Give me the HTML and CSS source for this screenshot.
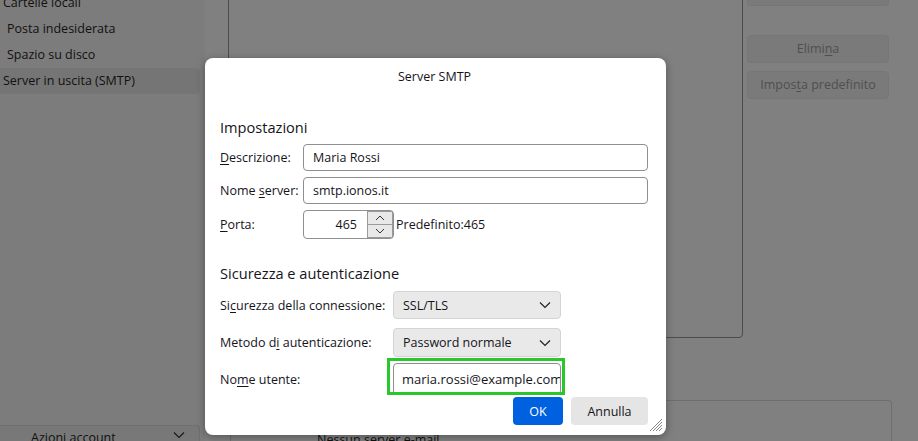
FILE: index.html
```html
<!DOCTYPE html>
<html lang="it">
<head>
    <meta charset="UTF-8">
    <title>Server SMTP</title>
    <link rel="stylesheet" href="styles.css">
</head>
<body>
    <div id="window">
        <div id="sidebar">
            <ul class="tree">
                <li class="root">Cartelle locali</li>
                <li class="sub">Posta indesiderata</li>
                <li class="sub">Spazio su disco</li>
                <li class="root selected">Server in uscita (SMTP)</li>
            </ul>
            <div class="acc-actions">
                <span>Azioni account</span>
                <svg width="12" height="8" viewBox="0 0 12 8"><path d="M1 1.5 6 6.5 11 1.5" fill="none" stroke="#1a1a1a" stroke-width="1.2"/></svg>
            </div>
        </div>
        <div id="main">
            <div class="top-row">
                <div class="server-list"></div>
                <div class="side-btns">
                    <div class="sbtn cut"></div>
                    <div class="sbtn">Elimi<u>n</u>a</div>
                    <div class="sbtn">Impos<u>t</u>a predefinito</div>
                </div>
            </div>
            <div class="details">
                <span class="det-text">Nessun server e-mail</span>
            </div>
        </div>
    </div>

    <div id="dialog">
        <div class="dlg-title">Server SMTP</div>

        <h2 class="section-head">Impostazioni</h2>
        <div class="grid-settings">
            <label><u>D</u>escrizione:</label>
            <div class="field">Maria Rossi</div>

            <label>Nome <u>s</u>erver:</label>
            <div class="field">smtp.ionos.it</div>

            <label><u>P</u>orta:</label>
            <div class="port-row">
                <div class="port">465</div>
                <div class="spin">
                    <div class="spin-btn"><svg width="10" height="6" viewBox="0 0 10 6"><path d="M1 5 5 1 9 5" fill="none" stroke="#333" stroke-width="1"/></svg></div>
                    <div class="spin-btn"><svg width="10" height="6" viewBox="0 0 10 6"><path d="M1 1 5 5 9 1" fill="none" stroke="#333" stroke-width="1"/></svg></div>
                </div>
                <span class="default-port">Predefinito:465</span>
            </div>
        </div>

        <h2 class="section-head second">Sicurezza e autenticazione</h2>
        <div class="grid-security">
            <label>Si<u>c</u>urezza della connessione:</label>
            <div class="select">SSL/TLS
                <svg width="12" height="8" viewBox="0 0 12 8"><path d="M1 1.5 6 6.5 11 1.5" fill="none" stroke="#222" stroke-width="1.2"/></svg>
            </div>

            <label>Metodo d<u>i</u> autenticazione:</label>
            <div class="select">Password normale
                <svg width="12" height="8" viewBox="0 0 12 8"><path d="M1 1.5 6 6.5 11 1.5" fill="none" stroke="#222" stroke-width="1.2"/></svg>
            </div>

            <label>No<u>m</u>e utente:</label>
            <div class="user-wrap">
                <div class="field user">maria.rossi@example.com</div>
                <div class="highlight"></div>
            </div>
        </div>

        <div class="dlg-buttons">
            <button class="btn primary">OK</button>
            <button class="btn">Annulla</button>
        </div>

        <svg class="grip" width="13" height="13" viewBox="0 0 13 13">
            <path d="M12 3 3 12M12 6 6 12M12 9 9 12M12 0 0 12" stroke="#888" stroke-width="1"/>
        </svg>
    </div>
</body>
</html>
```

FILE: styles.css
```css
*{
    margin: 0;
    padding: 0;
    box-sizing: border-box;
}
body{
    width: 918px;
    height: 441px;
    overflow: hidden;
    background-color: #808080;
    font-family: "Open Sans", "Noto Sans", sans-serif;
    font-size: 12px;
    color: #15141a;
    position: relative;
}
u{
    text-decoration-thickness: 1px;
    text-underline-offset: 2px;
}
#window{
    display: flex;
    height: 441px;
}
#sidebar{
    width: 205px;
    background-color: #7c7c7c;
    display: flex;
    flex-direction: column;
    justify-content: space-between;
}
.tree{
    list-style: none;
    margin-top: -10px;
}
.tree li{
    height: 26px;
    line-height: 26px;
    font-size: 12.5px;
    color: #111;
    width: 200px;
    border-radius: 0 4px 4px 0;
}
.tree .root{
    padding-left: 3px;
}
.tree .sub{
    padding-left: 7px;
}
.tree .selected{
    background-color: #757575;
}
.acc-actions{
    height: 17px;
    width: 200px;
    margin-bottom: -1px;
    background-color: #787878;
    border-top: 1px solid #6f6f6f;
    border-right: 1px solid #6f6f6f;
    border-radius: 0 4px 0 0;
    display: flex;
    align-items: flex-start;
    justify-content: space-between;
    padding: 5px 14px 0 31px;
    font-size: 12.5px;
    line-height: 14px;
    color: #111;
}
#main{
    flex: 1;
    display: flex;
    flex-direction: column;
    padding-left: 23px;
}
.top-row{
    display: flex;
    height: 338px;
}
.server-list{
    width: 515px;
    margin-top: -6px;
    height: 344px;
    border: 1px solid #4d4d4d;
    border-radius: 0 0 4px 4px;
}
.side-btns{
    margin-left: 4px;
    width: 142px;
    display: flex;
    flex-direction: column;
    gap: 8px;
}
.sbtn{
    height: 28px;
    background-color: #7a7a7a;
    border: 1px solid #767676;
    border-radius: 4px;
    color: #4f4f4f;
    font-size: 12.5px;
    line-height: 26px;
    text-align: center;
}
.sbtn.cut{
    margin-top: -22px;
    margin-bottom: 21px;
}
.details{
    margin-top: 62px;
    margin-left: 2px;
    width: 662px;
    flex: 1;
    border: 1px solid #6e6e6e;
    border-radius: 4px 4px 0 0;
    border-bottom: none;
    padding: 30px 0 0 86px;
}
.det-text{
    font-size: 12.5px;
    color: #111;
    line-height: 14px;
}

/* dialog */
#dialog{
    position: absolute;
    left: 205px;
    top: 58px;
    width: 461px;
    height: 377px;
    background-color: #fff;
    border-radius: 8px;
    box-shadow: 0 2px 8px rgba(0, 0, 0, 0.35);
    padding: 0 17px 0 15px;
}
.dlg-title{
    height: 38px;
    line-height: 38px;
    text-align: center;
    font-size: 12.5px;
}
.section-head{
    margin-top: 20px;
    margin-bottom: 6px;
    font-size: 14.6px;
    font-weight: normal;
    line-height: 22px;
}
.section-head.second{
    margin-top: 23px;
    margin-bottom: 7px;
}
label{
    font-size: 12.5px;
    display: block;
    align-self: center;
}
.grid-settings{
    display: grid;
    grid-template-columns: 83px 345px;
    grid-template-rows: 27px 27px 29px;
    row-gap: 6px;
}
.field{
    border: 1px solid #8f8f8f;
    border-radius: 4px;
    padding-left: 9px;
    font-size: 12.5px;
    display: flex;
    align-items: center;
    white-space: nowrap;
    overflow: hidden;
}
.port-row{
    display: flex;
    align-items: center;
}
.port{
    width: 91px;
    height: 29px;
    border: 1px solid #8f8f8f;
    border-radius: 4px;
    text-align: right;
    padding-right: 36px;
    line-height: 27px;
    font-size: 12.5px;
}
.spin{
    margin-left: -27px;
    width: 26px;
    height: 27px;
    display: flex;
    flex-direction: column;
}
.spin-btn{
    flex: 1;
    background-color: #e8e8e8;
    border: 1px solid #9a9a9a;
    display: flex;
    align-items: center;
    justify-content: center;
}
.spin-btn + .spin-btn{
    border-top: none;
}
.default-port{
    margin-left: 3px;
    font-size: 12.5px;
}
.grid-security{
    display: grid;
    grid-template-columns: 173px 168px;
    grid-template-rows: 28px 29px 29px;
    row-gap: 9px;
}
.grid-security > :nth-child(5),
.grid-security > :nth-child(6){
    margin-top: -3px;
}
.select{
    background-color: #e9e9e9;
    border: 1px solid #d4d4d4;
    border-radius: 4px;
    padding: 0 9px 0 9px;
    display: flex;
    align-items: center;
    justify-content: space-between;
    font-size: 12.5px;
}
.user-wrap{
    position: relative;
    display: flex;
}
.user-wrap .field{
    flex: 1;
    padding-left: 8px;
    font-size: 13px;
}
.highlight{
    position: absolute;
    left: -6px;
    top: -5px;
    width: 178px;
    height: 37px;
    border: 3px solid #2ac72c;
}
.dlg-buttons{
    margin-top: 2px;
    display: flex;
    justify-content: flex-end;
    gap: 8px;
    padding-right: 1px;
}
.btn{
    height: 28px;
    border: none;
    border-radius: 4px;
    background-color: #e5e5e5;
    font-family: inherit;
    font-size: 12.5px;
    color: #15141a;
    width: 77px;
}
.btn.primary{
    width: 50px;
    background-color: #0061e0;
    color: #fff;
}
.grip{
    position: absolute;
    right: 3px;
    bottom: 3px;
}
```
